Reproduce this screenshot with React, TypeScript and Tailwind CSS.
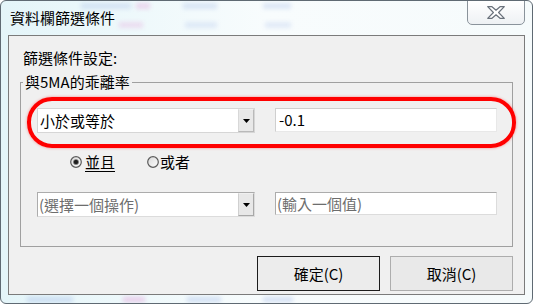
import React from "react";

const F = { fontFamily: '"Noto Sans CJK TC", "Noto Sans", sans-serif' };

function Arrow() {
  return (
    <svg width="7" height="4" viewBox="0 0 7 4">
      <polygon points="0,0 7,0 3.5,4" fill="#000" />
    </svg>
  );
}

function Radio({ on }: { on?: boolean }) {
  return (
    <svg width="12" height="12" viewBox="0 0 12 12">
      <defs>
        <linearGradient id={on ? "rg1" : "rg2"} x1="0" y1="0" x2="1" y2="1">
          <stop offset="0" stopColor="#d8d8d8" />
          <stop offset="1" stopColor="#ffffff" />
        </linearGradient>
      </defs>
      <circle cx="6" cy="6" r="5.3" fill={`url(#${on ? "rg1" : "rg2"})`} stroke="#5b5b5b" strokeWidth="1.2" />
      {on && <circle cx="6" cy="6" r="2.6" fill="#1e1e1e" stroke="#8a8a8a" strokeWidth="0.6" />}
    </svg>
  );
}

export default function App() {
  return (
    <div
      className="relative w-[533px] h-[304px] flex flex-col border border-[#5f6a73] rounded-[6px] bg-gradient-to-r from-[#e4f5f9] via-[#f8fcfd] to-[#f6fbfc] overflow-hidden text-[15px] text-black"
      style={F}
    >
      {/* blurred backdrop seen through the glass frame */}
      <div className="absolute left-[80px] top-[2px] w-[50px] h-[6px] bg-[#9fb6e6] opacity-30 blur-[2px]" />
      <div className="absolute left-[135px] top-[2px] w-[14px] h-[6px] bg-[#e08bd0] opacity-30 blur-[2px]" />
      <div className="absolute left-[182px] top-[2px] w-[34px] h-[6px] bg-[#9fb6e6] opacity-30 blur-[2px]" />
      <div className="absolute left-[262px] top-[2px] w-[28px] h-[6px] bg-[#9fb6e6] opacity-30 blur-[2px]" />
      <div className="absolute left-[118px] top-[21px] w-[24px] h-[6px] bg-[#e08bd0] opacity-25 blur-[2px]" />
      <div className="absolute left-[184px] top-[21px] w-[32px] h-[6px] bg-[#9fb6e6] opacity-25 blur-[2px]" />
      <div className="absolute left-[264px] top-[21px] w-[26px] h-[6px] bg-[#9fb6e6] opacity-25 blur-[2px]" />
      <div className="absolute left-[26px] top-[296px] w-[46px] h-[5px] bg-[#9fb6e6] opacity-40 blur-[2px]" />
      <div className="absolute left-[122px] top-[296px] w-[22px] h-[5px] bg-[#e08bd0] opacity-40 blur-[2px]" />
      <div className="absolute left-[186px] top-[296px] w-[34px] h-[5px] bg-[#9fb6e6] opacity-40 blur-[2px]" />
      <div className="absolute left-[262px] top-[296px] w-[30px] h-[5px] bg-[#9fb6e6] opacity-40 blur-[2px]" />

      {/* title bar */}
      <div className="relative h-[34px] flex items-start shrink-0">
        <span className="ml-[9px] mt-[7px] leading-[20px]">資料欄篩選條件</span>
        <div className="ml-auto mr-[7px] mt-[-1px] w-[58px] h-[25px] rounded-b-[5px] border border-[#8a939b] bg-gradient-to-b from-[#ffffff] to-[#eef1f4] flex items-center justify-center">
          <svg width="18" height="13" viewBox="0 0 18 13">
            <polygon
              points="0.7,0.7 5,0.7 9,4.2 13,0.7 17.3,0.7 11.6,6.5 17.3,12.3 13,12.3 9,8.8 5,12.3 0.7,12.3 6.4,6.5"
              fill="#ffffff"
              stroke="#6a727c"
              strokeWidth="1.2"
              strokeLinejoin="round"
            />
          </svg>
        </div>
      </div>

      {/* client area */}
      <div className="relative ml-[7px] w-[517px] h-[260px] border border-[#7b7b7b] bg-[#f0f0f0] flex flex-col">
        <div className="ml-[14px] mt-[12px] leading-[20px]">篩選條件設定:</div>

        <div className="relative ml-[11px] mt-[14px] w-[493px] h-[165px] border border-[#a0a0a0]">
          <span className="absolute left-[2px] top-[-11px] px-[2px] bg-[#f0f0f0] leading-[20px]">與5MA的乖離率</span>

          <div className="flex items-start ml-[16px] mt-[25px]">
            <div className="w-[218px] h-[25px] bg-white border border-[#d6d6d6] flex items-center">
              <span className="ml-[2px] leading-[20px] flex-1">小於或等於</span>
              <div className="w-[16px] h-[23px] bg-[#e8e8e8] border border-[#b9b9b9] border-t-[#f0f0f0] border-l-[#d8d8d8] flex items-center justify-center">
                <Arrow />
              </div>
            </div>
            <div className="ml-[20px] w-[222px] h-[24px] bg-white border border-[#cfcfcf] border-b-[#e8e8e8] border-r-[#e8e8e8] flex items-center">
              <span className="ml-[3px] leading-[20px]">-0.1</span>
            </div>
          </div>

          <div className="flex items-center ml-[49px] mt-[19px] h-[20px]">
            <Radio on />
            <span className="ml-[3px] leading-[20px] underline underline-offset-[3px]">並且</span>
            <span className="ml-[32px]"><Radio /></span>
            <span className="ml-[1px] leading-[20px]">或者</span>
          </div>

          <div className="flex items-start ml-[16px] mt-[20px]">
            <div className="w-[218px] h-[25px] bg-white border border-[#acacac] border-b-[#dcdcdc] border-r-[#dcdcdc] flex items-center">
              <span className="ml-[1px] leading-[20px] flex-1 text-[#6d6d6d]">(選擇一個操作)</span>
              <div className="w-[16px] h-[23px] bg-[#e8e8e8] border border-[#a8a8a8] border-t-[#f0f0f0] border-l-[#d0d0d0] flex items-center justify-center">
                <Arrow />
              </div>
            </div>
            <div className="ml-[20px] w-[222px] h-[23px] bg-white border border-[#acacac] border-b-[#dcdcdc] border-r-[#dcdcdc] flex items-center">
              <span className="ml-[1px] leading-[20px] text-[#6d6d6d]">(輸入一個值)</span>
            </div>
          </div>
        </div>

        <div className="flex ml-[248px] mt-[9px]">
          <div className="w-[123px] h-[35px] border border-[#1c1c1c] bg-[#ececec] flex items-center justify-center leading-[20px]">
            確定(C)
          </div>
          <div className="ml-[10px] w-[123px] h-[35px] border border-[#adadad] bg-[#e9e9e9] flex items-center justify-center leading-[20px]">
            取消(C)
          </div>
        </div>
      </div>

      {/* red highlight */}
      <div className="absolute left-[26px] top-[96px] w-[489px] h-[51px] rounded-[25px] border-[4px] border-[#ff0000] shadow-[0_0_3px_rgba(255,0,0,0.45)] pointer-events-none" />
    </div>
  );
}
